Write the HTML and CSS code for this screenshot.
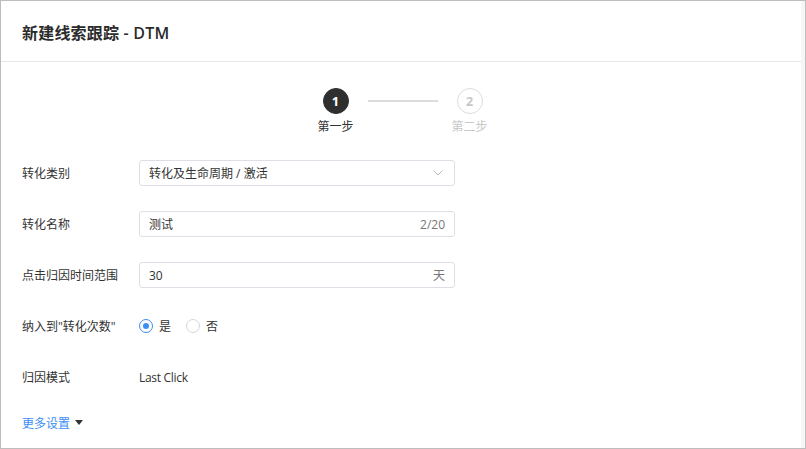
FILE: index.html
```html
<!DOCTYPE html>
<html lang="zh-CN">
<head>
<meta charset="UTF-8" /><meta name="viewport" content="width=device-width,initial-scale=1" />
<title>新建线索跟踪 - DTM</title>
<link rel="stylesheet" href="styles.css">
</head>
<body>
  <div class="frame">
    <div class="panel">
      <header class="head"><h1>新建线索跟踪 - DTM</h1></header>
      <div class="steps">
        <div class="step active">
          <span class="dot">1</span>
          <span class="step-label">第一步</span>
        </div>
        <span class="step-line"></span>
        <div class="step">
          <span class="dot">2</span>
          <span class="step-label">第二步</span>
        </div>
      </div>
      <form class="form">
        <div class="row">
          <label class="label">转化类别</label>
          <div class="field select">
            <span class="value">转化及生命周期 / 激活</span>
            <svg class="chev" width="10" height="6" viewBox="0 0 10 6" aria-hidden="true"><path d="M0.5 0.5L5 5L9.5 0.5" fill="none" stroke="#b8b8b8" stroke-width="1"/></svg>
          </div>
        </div>
        <div class="row">
          <label class="label">转化名称</label>
          <div class="field">
            <span class="value">测试</span>
            <span class="suffix">2/20</span>
          </div>
        </div>
        <div class="row">
          <label class="label">点击归因时间范围</label>
          <div class="field">
            <span class="value">30</span>
            <span class="suffix">天</span>
          </div>
        </div>
        <div class="row">
          <label class="label">纳入到"转化次数"</label>
          <div class="radios">
            <span class="radio checked"></span><span class="radio-text">是</span>
            <span class="radio"></span><span class="radio-text">否</span>
          </div>
        </div>
        <div class="row">
          <label class="label">归因模式</label>
          <span class="plain">Last Click</span>
        </div>
        <div class="row">
          <a class="more">更多设置 <span class="caret"></span></a>
        </div>
      </form>
    </div>
    <div class="strip"></div>
  </div>
</body>
</html>
```

FILE: styles.css
```css
:root {
  --border:#bdbdbd;
  --line:#e6e6e6;
  --text:#333;
  --muted:#c8c8c8;
  --blue:#3c8ef3;
}
*,*::before,*::after{box-sizing:border-box;}
body {
  margin:0;font-family:'Open Sans','Noto Sans CJK SC',sans-serif;color:var(--text);background:#fff;
}
.frame {
  width:806px;height:449px;border:1px solid var(--border);display:flex;overflow:hidden;
}
.panel { flex:1;min-width:0; }
.strip { width:4px;background:#f6f6f6; }
.head {
  height:61px;border-bottom:1px solid var(--line);padding:0 21px;display:flex;align-items:center;
}
.head h1 { margin:0;font-size:16px;font-weight:600;color:#2b2b2b;letter-spacing:.2px;padding-top:1px; }
.steps {
  display:flex;justify-content:center;align-items:flex-start;margin-top:26px;padding-left:3px;
}
.step { display:flex;flex-direction:column;align-items:center;width:60px; }
.dot {
  width:26px;height:26px;border-radius:50%;border:1px solid #dcdcdc;color:var(--muted);
  font-size:13px;font-weight:700;display:flex;align-items:center;justify-content:center;
}
.step.active .dot { background:#2f2f2f;border-color:#2f2f2f;color:#fff; }
.step-label { font-size:12px;color:var(--muted);margin-top:4px;line-height:17px; }
.step.active .step-label { color:#333; }
.step-line { width:70px;height:2px;background:#dcdcdc;margin:12px 2px 0; }
.form { padding:25px 21px 0; }
.row { display:flex;align-items:center;height:26px;margin-bottom:25px;font-size:12px; }
.label { width:117px;flex:none; }
.field {
  width:316px;height:26px;border:1px solid #dcdfe6;border-radius:3px;display:flex;align-items:center;
  justify-content:space-between;padding:0 9px;
}
.value { color:#333; }
.suffix { color:#777; }
.chev { margin-right:2px; }
.radios { display:flex;align-items:center; }
.radio {
  width:14px;height:14px;border-radius:50%;border:1px solid #d6d6d6;display:inline-block;position:relative;
}
.radio.checked { border-color:var(--blue); }
.radio.checked::after {
  content:"";position:absolute;left:3px;top:3px;width:6px;height:6px;border-radius:50%;background:var(--blue);
}
.radio-text { margin:0 15px 0 6px; }
.plain { color:#333;letter-spacing:-.3px; }
.more { color:var(--blue);display:flex;align-items:center;cursor:pointer;margin-top:-11px; }
.caret {
  width:0;height:0;border-left:4px solid transparent;border-right:4px solid transparent;border-top:5px solid #333;margin-left:5px;
}
```
